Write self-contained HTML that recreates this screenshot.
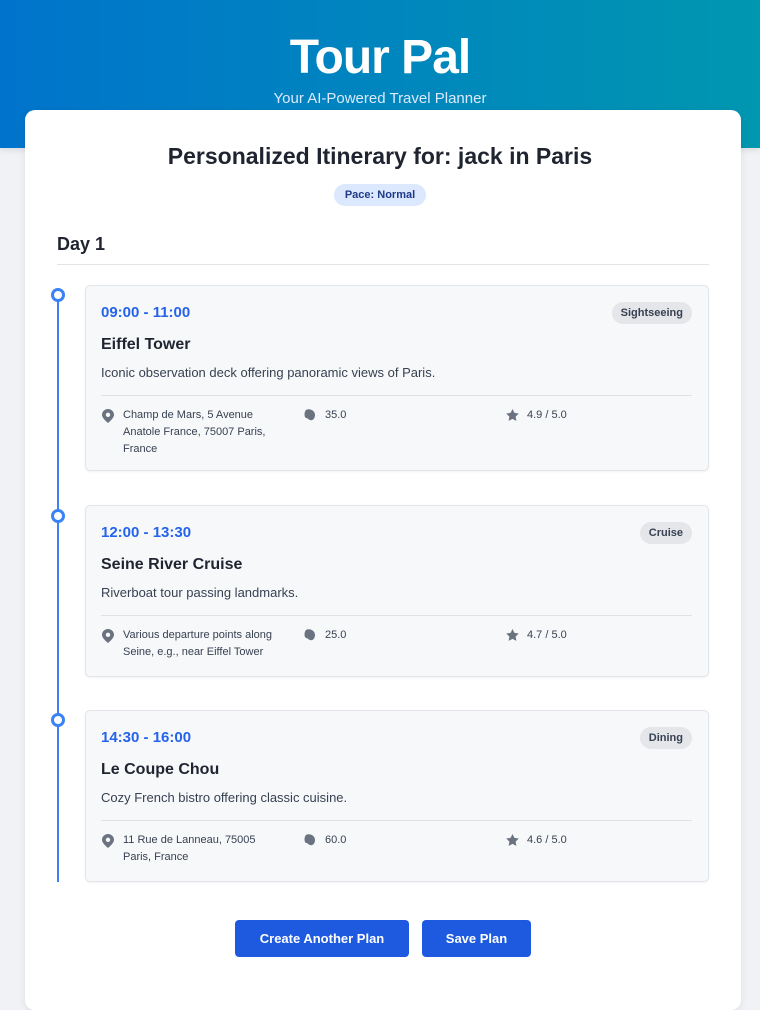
<!DOCTYPE html>
<html><head><meta charset="utf-8"><style>
*{box-sizing:border-box;margin:0;padding:0}
body{width:760px;height:978px;overflow:hidden;background:#f0f2f5;font-family:"Liberation Sans",Arial,sans-serif;color:#1f2430;position:relative}
.hdr{position:absolute;left:0;top:0;width:760px;height:148px;background:linear-gradient(90deg,#0074cc,#0097b0);box-shadow:0 2px 6px rgba(0,0,0,.1)}
.hdr h1{position:absolute;top:30px;width:100%;text-align:center;color:#fff;font-size:48px;font-weight:bold;letter-spacing:-1px}
.hdr p{position:absolute;top:90px;width:100%;text-align:center;color:#dbeafe;font-size:15px}
.card{position:absolute;left:25px;top:110px;width:716px;height:900px;background:#fff;border-radius:10px;box-shadow:0 2px 8px rgba(0,0,0,.08)}
.t{position:absolute;top:143px;width:760px;text-align:center;font-size:23px;font-weight:bold;color:#1f2430}
.pace{position:absolute;left:334px;top:184px;width:92px;height:22px;border-radius:11px;background:#dbe8fd;color:#1e3a8a;font-size:11px;font-weight:bold;text-align:center;line-height:22px}
.day{position:absolute;left:57px;top:234px;font-size:18px;font-weight:bold}
.dl{position:absolute;left:57px;top:264px;width:652px;height:1px;background:#e2e4e8}
.line{position:absolute;left:57px;top:290px;width:2px;height:592px;background:#3b82f6}
.dot{position:absolute;left:51px;width:14px;height:14px;border-radius:50%;border:3px solid #3b82f6;background:#fff}
.it{position:absolute;left:85px;width:624px;background:#f7f8fa;border:1px solid #e1e4e8;border-radius:5px;box-shadow:0 1px 2px rgba(0,0,0,.05)}
.tm{position:absolute;left:15px;top:18px;font-size:15px;font-weight:bold;color:#2563eb}
.bd{position:absolute;right:16px;top:16px;height:22px;padding:0 9px;border-radius:11px;background:#e4e6ea;font-size:11px;font-weight:bold;line-height:22px;color:#374151}
.nm{position:absolute;left:15px;top:50px;font-size:16px;font-weight:bold}
.ds{position:absolute;left:15px;top:79px;font-size:13px;color:#374151}
.hr{position:absolute;left:15px;right:16px;top:109px;height:1px;background:#dfe2e6}
.m{position:absolute;top:121px;font-size:11px;line-height:17px;color:#374151}
.m svg{position:absolute;left:-21px;top:2px}
.btn{position:absolute;top:920px;height:37px;background:#1d5ae0;color:#fff;border-radius:4px;font-size:13px;font-weight:bold;text-align:center;line-height:37px}
</style></head><body>
<div class="hdr"><h1>Tour Pal</h1><p>Your AI-Powered Travel Planner</p></div>
<div class="card"></div>
<div class="t">Personalized Itinerary for: jack in Paris</div>
<div class="pace">Pace: Normal</div>
<div class="day">Day 1</div><div class="dl"></div>
<div class="line"></div>
<div class="dot" style="top:288px"></div>
<div class="dot" style="top:509px"></div>
<div class="dot" style="top:713px"></div>

<div class="it" style="top:285px;height:186px">
<div class="tm">09:00 - 11:00</div><div class="bd">Sightseeing</div>
<div class="nm">Eiffel Tower</div><div class="ds">Iconic observation deck offering panoramic views of Paris.</div><div class="hr"></div>
<div class="m" style="left:37px;width:158px"><svg width="12" height="14" viewBox="0 0 12 14"><path d="M6 0C2.7 0 0 2.6 0 5.8 0 9.5 6 14 6 14s6-4.5 6-8.2C12 2.6 9.3 0 6 0zm0 8a2.2 2.2 0 1 1 0-4.4A2.2 2.2 0 0 1 6 8z" fill="#6b7280"/></svg>Champ de Mars, 5 Avenue Anatole France, 75007 Paris, France</div>
<div class="m" style="left:239px"><svg width="12" height="12" viewBox="0 0 12 12"><path d="M2 1c3-2 9 0 9 5 0 3-2 6-5 5-2-.5-2-2-4-2-2-1-2-6 0-8z" fill="#6b7280"/></svg>35.0</div>
<div class="m" style="left:441px"><svg width="13" height="12" viewBox="0 0 24 23"><path d="M12 0l3.7 7.5 8.3 1.2-6 5.8 1.4 8.3L12 18.9 4.6 22.8 6 14.5 0 8.7l8.3-1.2z" fill="#6b7280"/></svg>4.9 / 5.0</div>
</div>

<div class="it" style="top:505px;height:172px">
<div class="tm">12:00 - 13:30</div><div class="bd">Cruise</div>
<div class="nm">Seine River Cruise</div><div class="ds">Riverboat tour passing landmarks.</div><div class="hr"></div>
<div class="m" style="left:37px;width:175px"><svg width="12" height="14" viewBox="0 0 12 14"><path d="M6 0C2.7 0 0 2.6 0 5.8 0 9.5 6 14 6 14s6-4.5 6-8.2C12 2.6 9.3 0 6 0zm0 8a2.2 2.2 0 1 1 0-4.4A2.2 2.2 0 0 1 6 8z" fill="#6b7280"/></svg>Various departure points along Seine, e.g., near Eiffel Tower</div>
<div class="m" style="left:239px"><svg width="12" height="12" viewBox="0 0 12 12"><path d="M2 1c3-2 9 0 9 5 0 3-2 6-5 5-2-.5-2-2-4-2-2-1-2-6 0-8z" fill="#6b7280"/></svg>25.0</div>
<div class="m" style="left:441px"><svg width="13" height="12" viewBox="0 0 24 23"><path d="M12 0l3.7 7.5 8.3 1.2-6 5.8 1.4 8.3L12 18.9 4.6 22.8 6 14.5 0 8.7l8.3-1.2z" fill="#6b7280"/></svg>4.7 / 5.0</div>
</div>

<div class="it" style="top:710px;height:172px">
<div class="tm">14:30 - 16:00</div><div class="bd">Dining</div>
<div class="nm">Le Coupe Chou</div><div class="ds">Cozy French bistro offering classic cuisine.</div><div class="hr"></div>
<div class="m" style="left:37px;width:160px"><svg width="12" height="14" viewBox="0 0 12 14"><path d="M6 0C2.7 0 0 2.6 0 5.8 0 9.5 6 14 6 14s6-4.5 6-8.2C12 2.6 9.3 0 6 0zm0 8a2.2 2.2 0 1 1 0-4.4A2.2 2.2 0 0 1 6 8z" fill="#6b7280"/></svg>11 Rue de Lanneau, 75005 Paris, France</div>
<div class="m" style="left:239px"><svg width="12" height="12" viewBox="0 0 12 12"><path d="M2 1c3-2 9 0 9 5 0 3-2 6-5 5-2-.5-2-2-4-2-2-1-2-6 0-8z" fill="#6b7280"/></svg>60.0</div>
<div class="m" style="left:441px"><svg width="13" height="12" viewBox="0 0 24 23"><path d="M12 0l3.7 7.5 8.3 1.2-6 5.8 1.4 8.3L12 18.9 4.6 22.8 6 14.5 0 8.7l8.3-1.2z" fill="#6b7280"/></svg>4.6 / 5.0</div>
</div>

<div class="btn" style="left:235px;width:174px">Create Another Plan</div>
<div class="btn" style="left:422px;width:109px">Save Plan</div>
</body></html>
